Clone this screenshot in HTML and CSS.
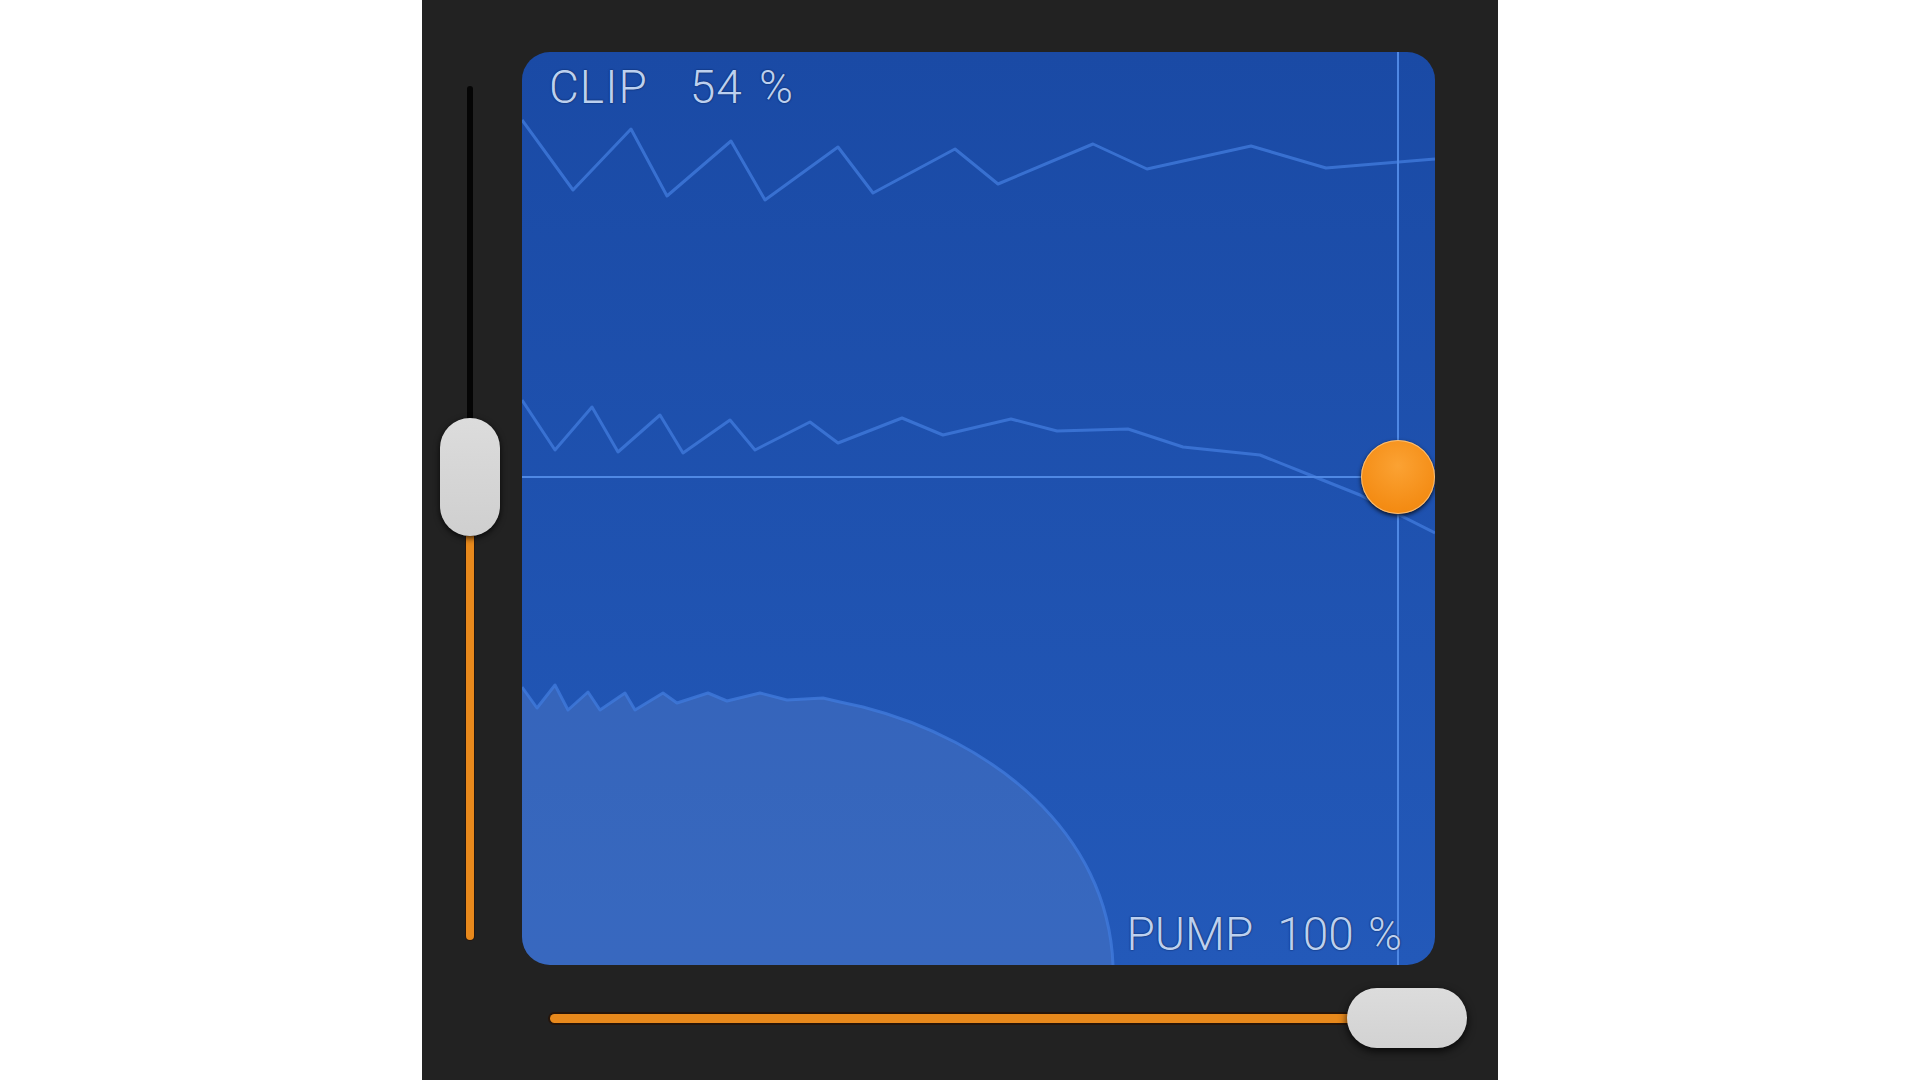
FILE: index.html
```html
<!DOCTYPE html>
<html lang="en">

<head>
    <meta charset="UTF-8">
    <meta name="viewport" content="width=device-width, initial-scale=1.0">
    <title>Clip / Pump</title>
    <link rel="stylesheet" href="styles.css">
</head>

<body>
    <!-- dark panel holding the sliders and the xy pad -->
    <div class="panel">

        <!-- vertical slider: CLIP -->
        <div class="vslider">
            <div class="vtrack-off"></div>
            <div class="vthumb"></div>
            <div class="vtrack-on"></div>
        </div>

        <!-- xy pad -->
        <div class="pad">
            <svg class="pad-svg" width="913" height="913" viewBox="0 0 913 913">
                <!-- bottom wave, filled -->
                <path class="wave-fill" d="M0,635 L15,656 L33,633 L46,658 L66,640 L78,658 L103,641 L113,658 L141,641 L155,651 L186,641 L205,649 L238,641 L265,648 L301,646 L318,650 L341,655 C470,688 586,780 591,913 L0,913 Z"/>
                <path class="wave" d="M0,635 L15,656 L33,633 L46,658 L66,640 L78,658 L103,641 L113,658 L141,641 L155,651 L186,641 L205,649 L238,641 L265,648 L301,646 L318,650 L341,655 C470,688 586,780 591,913"/>
                <!-- top wave -->
                <polyline class="wave" points="0,68 51,138 109,77 145,144 209,89 243,148 316,95 351,141 433,97 476,132 571,92 625,117 729,94 804,116 913,107"/>
                <!-- middle wave -->
                <polyline class="wave" points="0,348 33,398 70,355 96,400 138,363 161,401 208,368 233,398 288,370 316,391 380,366 421,383 489,367 535,379 606,377 661,395 738,403 788,423 838,443 913,481"/>
                <!-- crosshair -->
                <line class="cross" x1="876" y1="0" x2="876" y2="913"/>
                <line class="cross" x1="0" y1="425" x2="876" y2="425"/>
            </svg>

            <div class="label label-clip"><span>CLIP</span><span class="value">54 %</span></div>
            <div class="label label-pump"><span>PUMP</span><span class="value value-pump">100 %</span></div>

            <div class="dot"></div>
        </div>

        <div class="corner"></div>

        <!-- horizontal slider: PUMP -->
        <div class="hslider">
            <div class="htrack"></div>
            <div class="hthumb"></div>
        </div>
    </div>
</body>

</html>
```

FILE: styles.css
```css
* {
    margin: 0;
    padding: 0;
    box-sizing: border-box;
}

body {
    background-color: #ffffff;
    font-family: "Roboto", "Liberation Sans", sans-serif;
}

/* 外面的深色面板 */
.panel {
    width: 1076px;
    height: 1080px;
    margin: 0 auto;
    background-color: #222222;
    padding-top: 52px;
    display: grid;
    grid-template-columns: 100px 913px;
    grid-template-rows: 913px 1fr;
}

/* 竖直滑块 */
.vslider {
    width: 96px;
    padding: 34px 0 25px;
    display: flex;
    flex-direction: column;
    align-items: center;
}

.vtrack-off {
    width: 6px;
    height: 336px;
    background-color: #050505;
    border-radius: 3px 3px 0 0;
}

.vthumb {
    width: 60px;
    height: 118px;
    margin-top: -4px;
    border-radius: 30px;
    background: linear-gradient(#dcdcdc, #cfcfcf);
    box-shadow: 0 2px 6px rgba(0, 0, 0, 0.8);
    position: relative;
    z-index: 1;
}

.vtrack-on {
    width: 8px;
    height: 404px;
    background-color: #e8891c;
    border-radius: 0 0 4px 4px;
    box-shadow: 0 0 0 1px rgba(40, 15, 0, 0.6);
}

/* xy pad */
.pad {
    position: relative;
    width: 913px;
    height: 913px;
    border-radius: 28px;
    overflow: hidden;
    background: linear-gradient(#1a4aa5, #2359b9);
}

.pad-svg {
    display: block;
}

.wave {
    fill: none;
    stroke: #4079db;
    stroke-width: 3;
    stroke-linejoin: round;
    opacity: 0.8;
}

.wave-fill {
    fill: rgba(120, 150, 210, 0.25);
}

.cross {
    stroke: #4f88e4;
    stroke-width: 2;
}

.label {
    position: absolute;
    font-size: 46px;
    font-weight: 300;
    line-height: 46px;
    color: #bcd0ef;
    text-shadow: 0 0 2px #0b2864, 0 0 1px #0b2864;
    white-space: nowrap;
}

.label-clip {
    top: 12px;
    left: 27px;
    letter-spacing: 1px;
}

.label-pump {
    top: 859px;
    right: 33px;
}

.value {
    margin-left: 42px;
    word-spacing: 4px;
}

.value-pump {
    margin-left: 24px;
    word-spacing: 3px;
}

/* 橙色圆点 */
.dot {
    position: absolute;
    left: 839px;
    top: 388px;
    width: 74px;
    height: 74px;
    border-radius: 50%;
    background: radial-gradient(circle at 50% 35%, #fba233, #f48c14 70%, #ee8410);
    box-shadow: 0 0 0 1px rgba(255, 220, 170, 0.6) inset, 0 2px 4px rgba(0, 0, 0, 0.8);
}

/* 水平滑块 */
.hslider {
    grid-column: 2;
    height: 60px;
    margin-top: 23px;
    padding-left: 28px;
    display: flex;
    align-items: center;
}

.htrack {
    flex-shrink: 0;
    width: 800px;
    height: 9px;
    background-color: #e8891c;
    border-radius: 5px 0 0 5px;
    box-shadow: 0 0 0 2px rgba(40, 15, 0, 0.7);
}

.hthumb {
    flex-shrink: 0;
    width: 120px;
    height: 60px;
    margin-left: -3px;
    border-radius: 30px;
    background: linear-gradient(#dcdcdc, #d2d2d2);
    box-shadow: 0 3px 8px rgba(0, 0, 0, 0.8);
}
```
